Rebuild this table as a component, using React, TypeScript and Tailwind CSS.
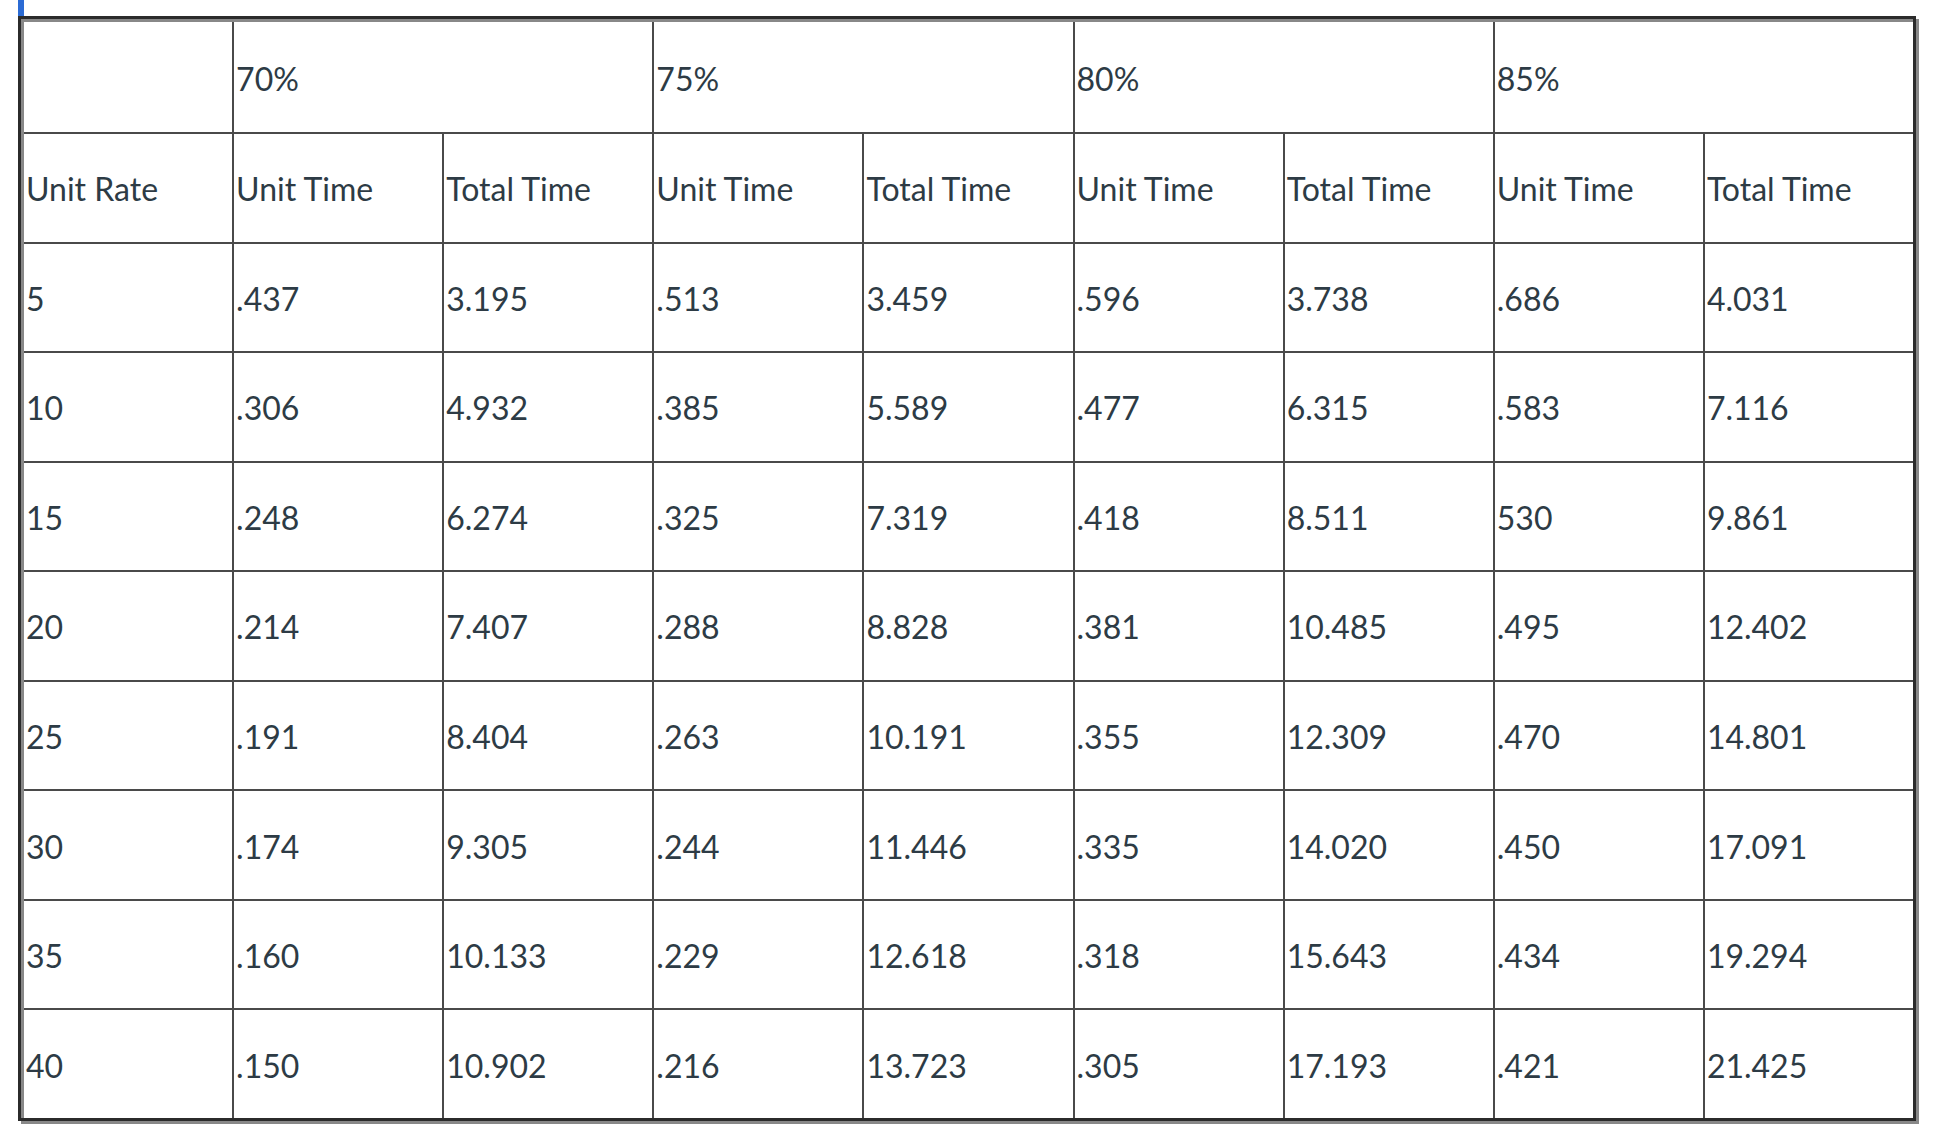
import React from "react";

const pcts = ["70%", "75%", "80%", "85%"];

const rows: string[][] = [
  ["5", ".437", "3.195", ".513", "3.459", ".596", "3.738", ".686", "4.031"],
  ["10", ".306", "4.932", ".385", "5.589", ".477", "6.315", ".583", "7.116"],
  ["15", ".248", "6.274", ".325", "7.319", ".418", "8.511", "530", "9.861"],
  ["20", ".214", "7.407", ".288", "8.828", ".381", "10.485", ".495", "12.402"],
  ["25", ".191", "8.404", ".263", "10.191", ".355", "12.309", ".470", "14.801"],
  ["30", ".174", "9.305", ".244", "11.446", ".335", "14.020", ".450", "17.091"],
  ["35", ".160", "10.133", ".229", "12.618", ".318", "15.643", ".434", "19.294"],
  ["40", ".150", "10.902", ".216", "13.723", ".305", "17.193", ".421", "21.425"],
];

const Cell: React.FC<{ children?: React.ReactNode; span?: boolean }> = ({ children, span }) => (
  <div
    className={`bg-white flex items-center pl-[2px] pt-[3px] text-[32px] text-[#2d3b45] ${
      span ? "col-span-2" : ""
    }`}
  >
    {children}
  </div>
);

export default function App() {
  return (
    <div className="min-h-screen bg-white font-['Lato','Liberation_Sans',sans-serif]">
      <div className="ml-[18px] w-[6px] h-[16px] bg-[#2b6bd4]" />
      <div className="ml-[18px] w-[1898px] h-[1105px] border-[3px] border-[#2b2b2b] shadow-[3px_3px_0_#888]">
        <div className="h-full border-t-[3px] border-l-[3px] border-[#888] bg-[#4a4a4a] grid grid-cols-9 grid-rows-[110px_repeat(9,1fr)] gap-[2px]">
          {/* header: percentages */}
          <Cell />
          {pcts.map((p) => (
            <Cell key={p} span>
              {p}
            </Cell>
          ))}

          {/* header: column names */}
          <Cell>Unit Rate</Cell>
          {pcts.map((p) => (
            <React.Fragment key={p}>
              <Cell>Unit Time</Cell>
              <Cell>Total Time</Cell>
            </React.Fragment>
          ))}

          {/* data rows */}
          {rows.map((r) =>
            r.map((v, i) => <Cell key={r[0] + "-" + i}>{v}</Cell>)
          )}
        </div>
      </div>
    </div>
  );
}
